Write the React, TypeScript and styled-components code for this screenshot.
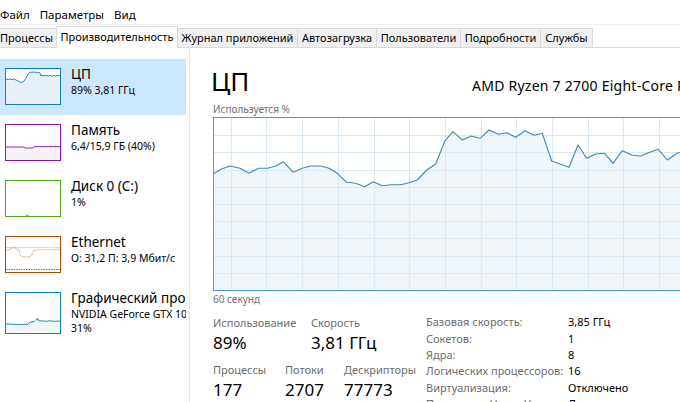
import React from "react";
import styled, { createGlobalStyle } from "styled-components";

const GlobalStyle = createGlobalStyle`
  html, body { margin: 0; padding: 0; background: #ffffff; }
  body {
    overflow: hidden;
    font-family: "Noto Sans", "DejaVu Sans", sans-serif;
    color: #000;
  }
  #root { width: 680px; height: 402px; overflow: hidden; }
`;

const Window = styled.div`
  width: 780px;
  height: 402px;
  display: flex;
  flex-direction: column;
  background: #fff;
`;

const MenuBar = styled.div`
  height: 25px;
  flex: none;
  box-sizing: border-box;
  display: flex;
  align-items: flex-start;
  padding-top: 8px;
  margin-left: -5px;
  border-bottom: 1px solid #f0f0f0;
`;

const MenuItem = styled.span`
  padding: 0 5px;
  font-size: 11.5px;
  line-height: 14px;
  color: #000;
`;

const TabStrip = styled.div`
  height: 23px;
  flex: none;
  display: flex;
  align-items: flex-end;
  margin-left: -4px;
  box-shadow: inset 0 -1px 0 #d9d9d9;
`;

const Tab = styled.div<{ $w: number; $active?: boolean }>`
  position: relative;
  box-sizing: border-box;
  width: ${(p) => p.$w}px;
  height: ${(p) => (p.$active ? 22 : 19)}px;
  margin-bottom: ${(p) => (p.$active ? 0 : 1)}px;
  margin-left: -1px;
  &:first-child { margin-left: 0; }
  z-index: ${(p) => (p.$active ? 2 : 1)};
  display: flex;
  align-items: center;
  justify-content: center;
  padding-bottom: ${(p) => (p.$active ? 1 : 0)}px;
  border: 1px solid #d9d9d9;
  border-bottom: none;
  background: ${(p) => (p.$active ? "#ffffff" : "#f0f0f0")};
  font-size: 11px;
  line-height: 14px;
  white-space: nowrap;
  color: #000;
`;

const Body = styled.div`
  flex: 1;
  min-height: 0;
  display: flex;
`;

const Sidebar = styled.div`
  width: 190px;
  flex: none;
  box-sizing: border-box;
  border-right: 1px solid #e6e6e6;
  padding-top: 11px;
  display: flex;
  flex-direction: column;
  overflow: hidden;
`;

const SideItem = styled.div<{ $active?: boolean; $h?: number }>`
  width: 186px;
  height: ${(p) => p.$h ?? 56}px;
  flex: none;
  box-sizing: border-box;
  padding: 9px 0 0 5px;
  display: flex;
  align-items: flex-start;
  gap: 10px;
  background: ${(p) => (p.$active ? "#cce8ff" : "transparent")};
  overflow: hidden;
`;

const Thumb = styled.div<{ $c: string; $h: number }>`
  width: 56px;
  height: ${(p) => p.$h}px;
  flex: none;
  box-sizing: border-box;
  border: 1px solid ${(p) => p.$c};
  background: #fff;
  svg { display: block; width: 100%; height: 100%; }
`;

const SideText = styled.div`
  display: flex;
  flex-direction: column;
  margin-top: -2px;
  white-space: nowrap;
  min-width: 0;
`;

const SideTitle = styled.div`
  font-size: 13.5px;
  line-height: 17px;
  color: #000;
`;

const SideSub = styled.div`
  font-size: 10.5px;
  line-height: 14px;
  color: #000;
`;

const Main = styled.div`
  flex: 1;
  min-width: 0;
  padding: 18px 0 0 23px;
  display: flex;
  flex-direction: column;
  & > * { flex: none; }
`;

const Header = styled.div`
  display: grid;
  grid-template-columns: 259px auto;
  align-items: baseline;
`;

const Title = styled.div`
  font-size: 26px;
  line-height: 30px;
  margin-left: -2px;
  color: #000;
`;

const CpuName = styled.div`
  font-size: 14px;
  line-height: 18px;
  letter-spacing: 0.25px;
  white-space: nowrap;
  color: #000;
`;

const SmallLabel = styled.div<{ $mt?: number }>`
  font-size: 10px;
  line-height: 13px;
  color: #707070;
  margin-top: ${(p) => p.$mt ?? 0}px;
`;

const GraphBox = styled.div`
  margin-top: 1px;
  width: 567px;
  height: 174px;
  box-sizing: border-box;
  border: 1px solid #4e9cc8;
  background: #fff;
  overflow: hidden;
  svg { display: block; }
`;

const Stats = styled.div`
  margin-top: 8px;
  display: flex;
`;

const LeftStats = styled.div`
  width: 213px;
  flex: none;
  display: flex;
  flex-direction: column;
  padding-top: 2px;
`;

const StatRow = styled.div<{ $cols: string; $mt?: number }>`
  display: grid;
  grid-template-columns: ${(p) => p.$cols};
  margin-top: ${(p) => p.$mt ?? 0}px;
`;

const Stat = styled.div`
  display: flex;
  flex-direction: column;
  gap: 2px;
`;

const StatLabel = styled.div`
  font-size: 11px;
  line-height: 14px;
  color: #6d6d6d;
  white-space: nowrap;
`;

const StatValue = styled.div`
  font-size: 17px;
  line-height: 22px;
  color: #000;
  white-space: nowrap;
`;

const Details = styled.div`
  display: grid;
  grid-template-columns: 142px auto;
  grid-auto-rows: 16.4px;
  align-items: center;
  font-size: 11px;
  line-height: 14px;
  white-space: nowrap;
`;

const DetailLabel = styled.div`
  color: #6d6d6d;
`;

const DetailValue = styled.div`
  color: #000;
`;

/* ---------- drawings ---------- */

type Pt = [number, number];

const toPts = (pts: Pt[]) => pts.map(([x, y]) => `${x},${y}`).join(" ");
const toArea = (pts: Pt[], h: number) =>
  `${pts[0][0]},${h} ${toPts(pts)} ${pts[pts.length - 1][0]},${h}`;

const graphPts: Pt[] = [
  [-1, 56.3], [6.7, 51.3], [16, 48], [26, 50.3], [35, 55.3], [44.3, 50.3],
  [53.3, 50.3], [61.7, 48], [69.3, 43.7], [79.3, 54.3], [88.3, 50.3],
  [96.7, 48], [106.7, 48], [115, 50.3], [123.3, 55.3], [132.7, 64.3],
  [141.7, 65.3], [150.7, 68.7], [159.3, 63.7], [168.3, 67.7], [177.3, 66.7],
  [186.7, 66.7], [195, 64.7], [203.3, 62], [212.7, 52], [221.7, 46],
  [231, 22.7], [239, 13.7], [248.3, 22], [257.3, 18], [266, 20.3], [275, 12],
  [284.3, 16.3], [292.7, 14.7], [301.7, 19.3], [311, 12.7], [320, 17.3],
  [328.3, 15.3], [337.7, 43], [346, 46], [355, 49.3], [364, 27], [372.7, 40.3],
  [381.7, 36], [390.7, 35.3], [399, 45.3], [408.3, 32.7], [417.7, 37],
  [426.7, 38], [435.7, 34.3], [444.3, 31.3], [453.3, 42], [462, 36], [471, 32],
  [480, 34], [489, 30], [498, 37], [507, 32], [516, 35], [525, 31], [534, 34],
  [543, 32], [552, 35], [566, 33],
];

const CpuGraph = () => {
  const w = 565;
  const h = 172;
  const hLines = Array.from({ length: 9 }, (_, i) => Math.round((i + 1) * 17.2) + 0.5);
  const vLines = Array.from({ length: 16 }, (_, i) => Math.round(16.7 + i * 35.7) + 0.5);
  return (
    <svg width={w} height={h} viewBox={`0 0 ${w} ${h}`}>
      <polygon points={toArea(graphPts, h)} fill="#f1f6fa" />
      {hLines.map((y) => (
        <line key={`h${y}`} x1={0} x2={w} y1={y} y2={y} stroke="#d9eaf4" strokeWidth={1} shapeRendering="crispEdges" />
      ))}
      {vLines.map((x) => (
        <line key={`v${x}`} x1={x} x2={x} y1={0} y2={h} stroke="#d9eaf4" strokeWidth={1} shapeRendering="crispEdges" />
      ))}
      <polyline points={toPts(graphPts)} fill="none" stroke="#4088bb" strokeWidth={1.1} strokeLinejoin="round" />
    </svg>
  );
};

const MiniGraph = ({
  pts,
  h,
  stroke,
  fill,
}: {
  pts: Pt[];
  h: number;
  stroke: string;
  fill: string;
}) => (
  <svg viewBox={`0 0 54 ${h}`} preserveAspectRatio="none">
    <polygon points={toArea(pts, h)} fill={fill} />
    <polyline points={toPts(pts)} fill="none" stroke={stroke} strokeWidth={0.9} />
  </svg>
);

const cpuMini: Pt[] = [
  [0, 10], [2, 10.6], [4, 9.8], [6, 10.6], [8, 10], [10, 11], [12, 11.8],
  [14, 13], [16, 13.3], [18, 12], [20, 9], [22, 5], [24, 3.4], [26, 3.2],
  [28, 3], [30, 3.4], [32, 3.2], [34, 4], [35, 7], [36, 6], [38, 6.8],
  [40, 6.2], [42, 7], [44, 6.3], [46, 7.2], [48, 6.5], [50, 7], [52, 6.3], [54, 6.8],
];

const memMini: Pt[] = [
  [0, 22], [18, 22], [19, 23], [27, 23], [28, 21.6], [54, 21.6],
];

const gpuMini: Pt[] = [
  [0, 31], [8, 31.3], [16, 31.5], [22, 31.2], [24, 29], [28, 28.6], [30, 26.5],
  [32, 25.6], [33, 28], [36, 27.8], [40, 28.3], [44, 27.8], [48, 28.3], [54, 28],
];

const ethMini: Pt[] = [
  [0, 13], [4, 13], [5, 11], [10, 11], [11, 13], [13, 13], [14, 18], [16, 19.5],
  [20, 20], [24, 19.5], [26, 17], [28, 13], [30, 14], [32, 12], [34, 13],
  [36, 12], [38, 13.5], [40, 12], [42, 13], [44, 12], [46, 13.5], [48, 12],
  [50, 13], [52, 12], [54, 13],
];

const EthGraph = () => (
  <svg viewBox="0 0 54 35" preserveAspectRatio="none">
    <line x1={0} x2={54} y1={10.5} y2={10.5} stroke="#e8c9b0" strokeWidth={0.8} />
    <polyline points={toPts(ethMini)} fill="none" stroke="#d8834a" strokeWidth={0.8} strokeDasharray="1.5 0.8" />
    <line x1={0} x2={54} y1={32.5} y2={32.5} stroke="#a74f01" strokeWidth={0.9} strokeDasharray="1.5 1" />
  </svg>
);

const DiskGraph = () => (
  <svg viewBox="0 0 54 35" preserveAspectRatio="none">
    <line x1={20} x2={22.5} y1={34.3} y2={34.3} stroke="#4da60c" strokeWidth={1} />
  </svg>
);

export default function App() {
  const tabs: [string, number][] = [
    ["Процессы", 61],
    ["Производительность", 122],
    ["Журнал приложений", 121],
    ["Автозагрузка", 80],
    ["Пользователи", 85],
    ["Подробности", 81],
    ["Службы", 53],
  ];
  const details: [string, string][] = [
    ["Базовая скорость:", "3,85 ГГц"],
    ["Сокетов:", "1"],
    ["Ядра:", "8"],
    ["Логических процессоров:", "16"],
    ["Виртуализация:", "Отключено"],
    ["Поддержка Hyper-V:", "Да"],
  ];
  return (
    <>
      <GlobalStyle />
      <Window>
        <MenuBar>
          <MenuItem>Файл</MenuItem>
          <MenuItem>Параметры</MenuItem>
          <MenuItem>Вид</MenuItem>
        </MenuBar>
        <TabStrip>
          {tabs.map(([t, w]) => (
            <Tab key={t} $w={w} $active={t === "Производительность"}>
              {t}
            </Tab>
          ))}
        </TabStrip>
        <Body>
          <Sidebar>
            <SideItem $active>
              <Thumb $c="#117dbb" $h={37}>
                <MiniGraph pts={cpuMini} h={35} stroke="#117dbb" fill="#e6f0f8" />
              </Thumb>
              <SideText>
                <SideTitle>ЦП</SideTitle>
                <SideSub>89% 3,81 ГГц</SideSub>
              </SideText>
            </SideItem>
            <SideItem>
              <Thumb $c="#8b12ae" $h={37}>
                <MiniGraph pts={memMini} h={35} stroke="#8b12ae" fill="#f4f2f4" />
              </Thumb>
              <SideText>
                <SideTitle>Память</SideTitle>
                <SideSub>6,4/15,9 ГБ (40%)</SideSub>
              </SideText>
            </SideItem>
            <SideItem>
              <Thumb $c="#4da60c" $h={37}>
                <DiskGraph />
              </Thumb>
              <SideText>
                <SideTitle>Диск 0 (C:)</SideTitle>
                <SideSub>1%</SideSub>
              </SideText>
            </SideItem>
            <SideItem>
              <Thumb $c="#a74f01" $h={37}>
                <EthGraph />
              </Thumb>
              <SideText>
                <SideTitle>Ethernet</SideTitle>
                <SideSub>О: 31,2 П: 3,9 Мбит/с</SideSub>
              </SideText>
            </SideItem>
            <SideItem $h={70}>
              <Thumb $c="#117dbb" $h={42}>
                <MiniGraph pts={gpuMini} h={40} stroke="#117dbb" fill="#f1f6fa" />
              </Thumb>
              <SideText>
                <SideTitle>Графический процессор 0</SideTitle>
                <SideSub>NVIDIA GeForce GTX 1060 6GB</SideSub>
                <SideSub>31%</SideSub>
              </SideText>
            </SideItem>
          </Sidebar>
          <Main>
            <Header>
              <Title>ЦП</Title>
              <CpuName>AMD Ryzen 7 2700 Eight-Core Processor</CpuName>
            </Header>
            <SmallLabel $mt={7}>Используется %</SmallLabel>
            <GraphBox>
              <CpuGraph />
            </GraphBox>
            <SmallLabel $mt={2}>60 секунд</SmallLabel>
            <Stats>
              <LeftStats>
                <StatRow $cols="98px auto">
                  <Stat>
                    <StatLabel>Использование</StatLabel>
                    <StatValue>89%</StatValue>
                  </Stat>
                  <Stat>
                    <StatLabel>Скорость</StatLabel>
                    <StatValue>3,81 ГГц</StatValue>
                  </Stat>
                </StatRow>
                <StatRow $cols="72px 59px auto" $mt={9}>
                  <Stat>
                    <StatLabel>Процессы</StatLabel>
                    <StatValue>177</StatValue>
                  </Stat>
                  <Stat>
                    <StatLabel>Потоки</StatLabel>
                    <StatValue>2707</StatValue>
                  </Stat>
                  <Stat>
                    <StatLabel>Дескрипторы</StatLabel>
                    <StatValue>77773</StatValue>
                  </Stat>
                </StatRow>
              </LeftStats>
              <Details>
                {details.map(([l, v]) => (
                  <React.Fragment key={l}>
                    <DetailLabel>{l}</DetailLabel>
                    <DetailValue>{v}</DetailValue>
                  </React.Fragment>
                ))}
              </Details>
            </Stats>
          </Main>
        </Body>
      </Window>
    </>
  );
}
